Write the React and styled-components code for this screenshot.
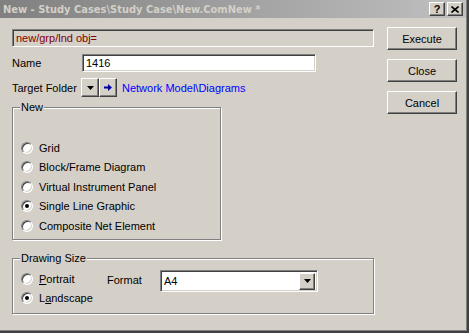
import React from 'react';
import styled, { createGlobalStyle } from 'styled-components';

const Global = createGlobalStyle`
  html, body { margin: 0; padding: 0; background: #d4d0c8; }
  body { font-family: "Liberation Sans", Arial, sans-serif; font-size: 11px; color: #000; }
  * { box-sizing: border-box; }
`;

const Window = styled.div`
  width: 469px;
  height: 333px;
  background: #d4d0c8;
  display: flex;
  flex-direction: column;
  overflow: hidden;
  box-shadow: inset -1px -1px 0 #404040, inset -2px -2px 0 #404040, inset -3px -3px 0 #808080;
`;

const TitleBar = styled.div`
  height: 18px;
  margin-right: 3px;
  background: linear-gradient(to right, #808080, #c0c0c0);
  display: flex;
  align-items: center;
  padding: 0 3px 0 3px;
`;

const TitleText = styled.div`
  flex: 1;
  color: #d4d0c8;
  font-family: "DejaVu Sans Condensed", "DejaVu Sans", sans-serif;
  font-weight: bold;
  font-size: 11px;
  white-space: nowrap;
`;

const CapButton = styled.div`
  width: 16px;
  height: 14px;
  margin-left: ${p => p.$gap || 0}px;
  background: #d4d0c8;
  border: 1px solid;
  border-color: #fff #404040 #404040 #fff;
  box-shadow: inset -1px -1px 0 #808080;
  display: flex;
  align-items: center;
  justify-content: center;
  font-family: "Liberation Sans", Arial, sans-serif;
  font-weight: bold;
  font-size: 11px;
  line-height: 1;
`;

const Body = styled.div`
  display: flex;
  padding: 10px 0 0 12px;
`;

const LeftColumn = styled.div`
  width: 362px;
  padding-top: 1px;
  display: flex;
  flex-direction: column;
`;

const Sunken = styled.div`
  border: 1px solid;
  border-color: #808080 #fff #fff #808080;
  box-shadow: inset 1px 1px 0 #404040, inset -1px -1px 0 #d4d0c8;
  background: ${p => p.$bg || '#fff'};
`;

const CommandField = styled(Sunken)`
  height: 18px;
  padding: 0 0 0 3px;
  color: #800000;
  display: flex;
  align-items: center;
`;

const Row = styled.div`
  display: flex;
  align-items: center;
  height: ${p => p.$h}px;
  margin-top: ${p => p.$mt}px;
`;

const Label = styled.div`
  width: ${p => p.$w}px;
  white-space: nowrap;
`;

const TextInput = styled(Sunken)`
  width: 234px;
  height: 18px;
  padding-left: 3px;
  display: flex;
  align-items: center;
`;

const SmallButton = styled.div`
  width: 18px;
  height: 19px;
  background: #d4d0c8;
  border: 1px solid;
  border-color: #fff #404040 #404040 #fff;
  box-shadow: inset -1px -1px 0 #808080;
  display: flex;
  align-items: center;
  justify-content: center;
`;

const Link = styled.div`
  color: #0000ff;
  margin-left: 5px;
  white-space: nowrap;
`;

const Group = styled.div`
  position: relative;
  width: ${p => p.$w}px;
  height: ${p => p.$h}px;
  margin-top: ${p => p.$mt}px;
  border: 1px solid #808080;
  box-shadow: inset 1px 1px 0 #fff, 1px 1px 0 #fff;
  padding: ${p => p.$pad};
`;

const GroupLabel = styled.div`
  position: absolute;
  top: -7px;
  left: 7px;
  padding: 0 1px;
  background: #d4d0c8;
  line-height: 13px;
`;

const RadioRow = styled.div`
  display: flex;
  align-items: center;
  height: ${p => p.$h || 19.5}px;
`;

const RadioDot = styled.span`
  position: relative;
  width: 12px;
  height: 12px;
  border-radius: 50%;
  border: 1px solid;
  border-color: #808080 #fff #fff #808080;
  box-shadow: inset 1px 1px 0 #404040, inset -1px -1px 0 #d4d0c8;
  background: #fff;
  margin-right: 6px;
  flex: none;
  &::after {
    content: '';
    display: ${p => (p.$on ? 'block' : 'none')};
    position: absolute;
    left: 3px;
    top: 3px;
    width: 4px;
    height: 4px;
    border-radius: 50%;
    background: #000;
  }
`;

const U = styled.span`
  text-decoration: underline;
`;

const SizeRow = styled.div`
  display: flex;
  align-items: flex-start;
`;

const RadioColumn = styled.div`
  width: 86px;
  display: flex;
  flex-direction: column;
`;

const FormatLabel = styled.div`
  width: 53px;
  margin-top: 5px;
  line-height: 13px;
`;

const Select = styled(Sunken)`
  width: 158px;
  height: 22px;
  margin-top: 1px;
  display: flex;
  align-items: center;
  padding: 2px 2px 2px 3px;
`;

const SelectText = styled.div`
  flex: 1;
`;

const DropButton = styled(SmallButton)`
  width: 16px;
  height: 17px;
`;

const ButtonColumn = styled.div`
  margin-left: 13px;
  margin-top: -1px;
  display: flex;
  flex-direction: column;
  gap: 9px;
`;

const PushButton = styled.div`
  width: 70px;
  height: 23px;
  background: #d4d0c8;
  border: 1px solid;
  border-color: #fff #404040 #404040 #fff;
  box-shadow: inset -1px -1px 0 #808080;
  display: flex;
  align-items: center;
  justify-content: center;
`;

const DownTri = () => (
  <svg width="7" height="4" viewBox="0 0 7 4">
    <path d="M0 0h7L3.5 4z" fill="#000" />
  </svg>
);

const Radio = ({ on, children, h }) => (
  <RadioRow $h={h}>
    <RadioDot $on={on} />
    <span>{children}</span>
  </RadioRow>
);

export default function App() {
  return (
    <>
      <Global />
      <Window>
        <TitleBar>
          <TitleText>New - Study Cases\Study Case\New.ComNew *</TitleText>
          <CapButton>?</CapButton>
          <CapButton $gap={2}>
            <svg width="8" height="7" viewBox="0 0 8 7">
              <path d="M0.5 0.5l7 6M7.5 0.5l-7 6" stroke="#000" strokeWidth="1.6" />
            </svg>
          </CapButton>
        </TitleBar>
        <Body>
          <LeftColumn>
            <CommandField $bg="#d4d0c8">new/grp/lnd obj=</CommandField>
            <Row $h={18} $mt={7}>
              <Label $w={70}>Name</Label>
              <TextInput>1416</TextInput>
            </Row>
            <Row $h={19} $mt={6}>
              <Label $w={69}>Target Folder</Label>
              <SmallButton><DownTri /></SmallButton>
              <SmallButton>
                <svg width="8" height="7" viewBox="0 0 8 7">
                  <path d="M0 2.5h4V0l4 3.5L4 7V4.5H0z" fill="#0000a0" />
                </svg>
              </SmallButton>
              <Link>Network Model\Diagrams</Link>
            </Row>
            <Group $w={209} $h={133} $mt={10} $pad="30px 0 0 8px">
              <GroupLabel>New</GroupLabel>
              <Radio>Grid</Radio>
              <Radio>Block/Frame Diagram</Radio>
              <Radio>Virtual Instrument Panel</Radio>
              <Radio on>Single Line Graphic</Radio>
              <Radio>Composite Net Element</Radio>
            </Group>
            <Group $w={362} $h={56} $mt={18} $pad="10px 0 0 8px">
              <GroupLabel>Drawing Size</GroupLabel>
              <SizeRow>
                <RadioColumn>
                  <Radio h={19}><U>P</U>ortrait</Radio>
                  <Radio h={19} on>L<U>a</U>ndscape</Radio>
                </RadioColumn>
                <FormatLabel>Format</FormatLabel>
                <Select>
                  <SelectText>A4</SelectText>
                  <DropButton><DownTri /></DropButton>
                </Select>
              </SizeRow>
            </Group>
          </LeftColumn>
          <ButtonColumn>
            <PushButton>Execute</PushButton>
            <PushButton>Close</PushButton>
            <PushButton>Cancel</PushButton>
          </ButtonColumn>
        </Body>
      </Window>
    </>
  );
}
